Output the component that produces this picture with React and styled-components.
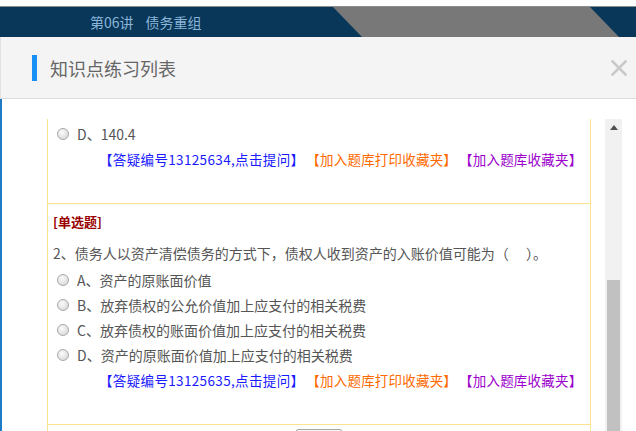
import React from "react";
import styled, { createGlobalStyle } from "styled-components";

const Global = createGlobalStyle`
  html, body { margin: 0; padding: 0; background: #fff; overflow: hidden; }
  body { font-family: "Noto Sans CJK SC", "Noto Sans", sans-serif; }
  * { box-sizing: border-box; }
`;

const Page = styled.div`
  width: 636px;
  height: 431px;
  display: flex;
  flex-direction: column;
  overflow: hidden;
`;

const TopStrip = styled.div`
  height: 7px;
  background: #fff;
  border-bottom: 1px solid #8c8c8c;
  flex: none;
`;

const NavBand = styled.div`
  position: relative;
  height: 30px;
  flex: none;
  background: #093759;
  padding-left: 90px;
  display: flex;
  align-items: center;
  gap: 12px;
  font-size: 14px;
  color: #8ab6d9;
  &::before {
    content: "";
    position: absolute;
    left: 333px;
    top: 0;
    width: 286px;
    height: 100%;
    background: #787878;
    clip-path: polygon(0 0, 257px 0, 286px 100%, 29px 100%);
  }
`;

const NavText = styled.span`
  position: relative;
  line-height: 30px;
`;

const Dialog = styled.div`
  flex: 1;
  display: flex;
  flex-direction: column;
  min-height: 0;
`;

const Header = styled.div`
  height: 62px;
  flex: none;
  background: #f4f4f4;
  border-bottom: 1px solid #dcdcdc;
  border-left: 1px solid #e2e2e2;
  display: flex;
  align-items: center;
  padding-left: 31px;
  padding-right: 9px;
`;

const TitleBar = styled.span`
  width: 5px;
  height: 26px;
  background: #1890f5;
  flex: none;
`;

const Title = styled.h2`
  margin: 0 0 0 13px;
  font-size: 18px;
  font-weight: 400;
  color: #666;
  flex: 1;
  line-height: 26px;
`;

const CloseIcon = () => (
  <svg width="16" height="16" viewBox="0 0 16 16" aria-label="close">
    <path d="M1.5 1.5 L14.5 14.5 M14.5 1.5 L1.5 14.5" stroke="#c9c9c9" strokeWidth="2.6" strokeLinecap="square" />
  </svg>
);

const Body = styled.div`
  flex: 1;
  min-height: 0;
  background: #fff;
  border-left: 2px solid #1f7bc3;
  padding: 20px 0 0 45px;
  display: flex;
  align-items: stretch;
  gap: 14px;
`;

const List = styled.div`
  width: 544px;
  flex: none;
  border-left: 1px solid #fde28c;
  border-right: 1px solid #fde28c;
  display: flex;
  flex-direction: column;
`;

const Item = styled.div`
  border-bottom: 1px solid #fde28c;
  padding: ${(p) => (p.$cut ? "2px" : "8px")} 0 32px 5px;
`;

const TypeLabel = styled.div`
  font-size: 13px;
  line-height: 20px;
  color: #9a0000;
  font-weight: 700;
`;

const Question = styled.div`
  margin-top: 10px;
  font-size: 14px;
  line-height: 22px;
  color: #555;
  white-space: nowrap;
`;

const Options = styled.div`
  margin-top: ${(p) => (p.$first ? "0" : "3px")};
  padding-left: 4px;
`;

const Option = styled.label`
  display: flex;
  align-items: center;
  gap: 8px;
  height: 25px;
  font-size: 14px;
  color: #555;
  white-space: nowrap;
`;

const Radio = styled.span`
  width: 12px;
  height: 12px;
  border-radius: 50%;
  border: 1px solid #a9a9a9;
  background: radial-gradient(circle at 40% 35%, #fbfbfb 0%, #e4e4e4 55%, #cfcfcf 100%);
  flex: none;
`;

const Links = styled.div`
  height: 25px;
  display: flex;
  align-items: center;
  gap: 2px;
  padding-left: 46px;
  font-size: 13.5px;
  white-space: nowrap;
`;

const LinkText = styled.a`
  color: ${(p) => p.$color};
  text-decoration: none;
  cursor: pointer;
  letter-spacing: ${(p) => p.$spacing || "0"};
`;

const ButtonRow = styled.div`
  display: flex;
  justify-content: center;
  padding-top: 4px;
`;

const SubmitButton = styled.button`
  width: 46px;
  height: 28px;
  border: 1px solid #a8a8a8;
  border-radius: 2px;
  background: #f6f6f6;
  padding: 0;
`;

const Scrollbar = styled.div`
  width: 17px;
  flex: none;
  background: #f1f1f1;
  display: flex;
  flex-direction: column;
  align-items: center;
`;

const ArrowBox = styled.div`
  width: 17px;
  height: 17px;
  display: flex;
  align-items: center;
  justify-content: center;
  flex: none;
`;

const Thumb = styled.div`
  margin-top: 144px;
  width: 13px;
  height: 220px;
  background: #c1c1c1;
  flex: none;
`;

const LinkLine = ({ id }) => (
  <Links>
    <LinkText $color="#1a1aff" $spacing="0.35px">【答疑编号{id},点击提问】</LinkText>
    <LinkText $color="#ff6a00" $spacing="0.2px">【加入题库打印收藏夹】</LinkText>
    <LinkText $color="#9b00cc" $spacing="0.2px">【加入题库收藏夹】</LinkText>
  </Links>
);

const options2 = [
  "A、资产的原账面价值",
  "B、放弃债权的公允价值加上应支付的相关税费",
  "C、放弃债权的账面价值加上应支付的相关税费",
  "D、资产的原账面价值加上应支付的相关税费",
];

export default function App() {
  return (
    <Page>
      <Global />
      <TopStrip />
      <NavBand>
        <NavText>第06讲</NavText>
        <NavText>债务重组</NavText>
      </NavBand>
      <Dialog>
        <Header>
          <TitleBar />
          <Title>知识点练习列表</Title>
          <CloseIcon />
        </Header>
        <Body>
          <List>
            <Item $cut>
              <Options $first>
                <Option>
                  <Radio />
                  D、140.4
                </Option>
              </Options>
              <LinkLine id="13125634" />
            </Item>
            <Item>
              <TypeLabel>[单选题]</TypeLabel>
              <Question>2、债务人以资产清偿债务的方式下，债权人收到资产的入账价值可能为（　 ）。</Question>
              <Options>
                {options2.map((o) => (
                  <Option key={o}>
                    <Radio />
                    {o}
                  </Option>
                ))}
              </Options>
              <LinkLine id="13125635" />
            </Item>
            <ButtonRow>
              <SubmitButton aria-label="提交" />
            </ButtonRow>
          </List>
          <Scrollbar>
            <ArrowBox>
              <svg width="8" height="5" viewBox="0 0 8 5">
                <path d="M0 5 L4 0 L8 5 Z" fill="#505050" />
              </svg>
            </ArrowBox>
            <Thumb />
          </Scrollbar>
        </Body>
      </Dialog>
    </Page>
  );
}
